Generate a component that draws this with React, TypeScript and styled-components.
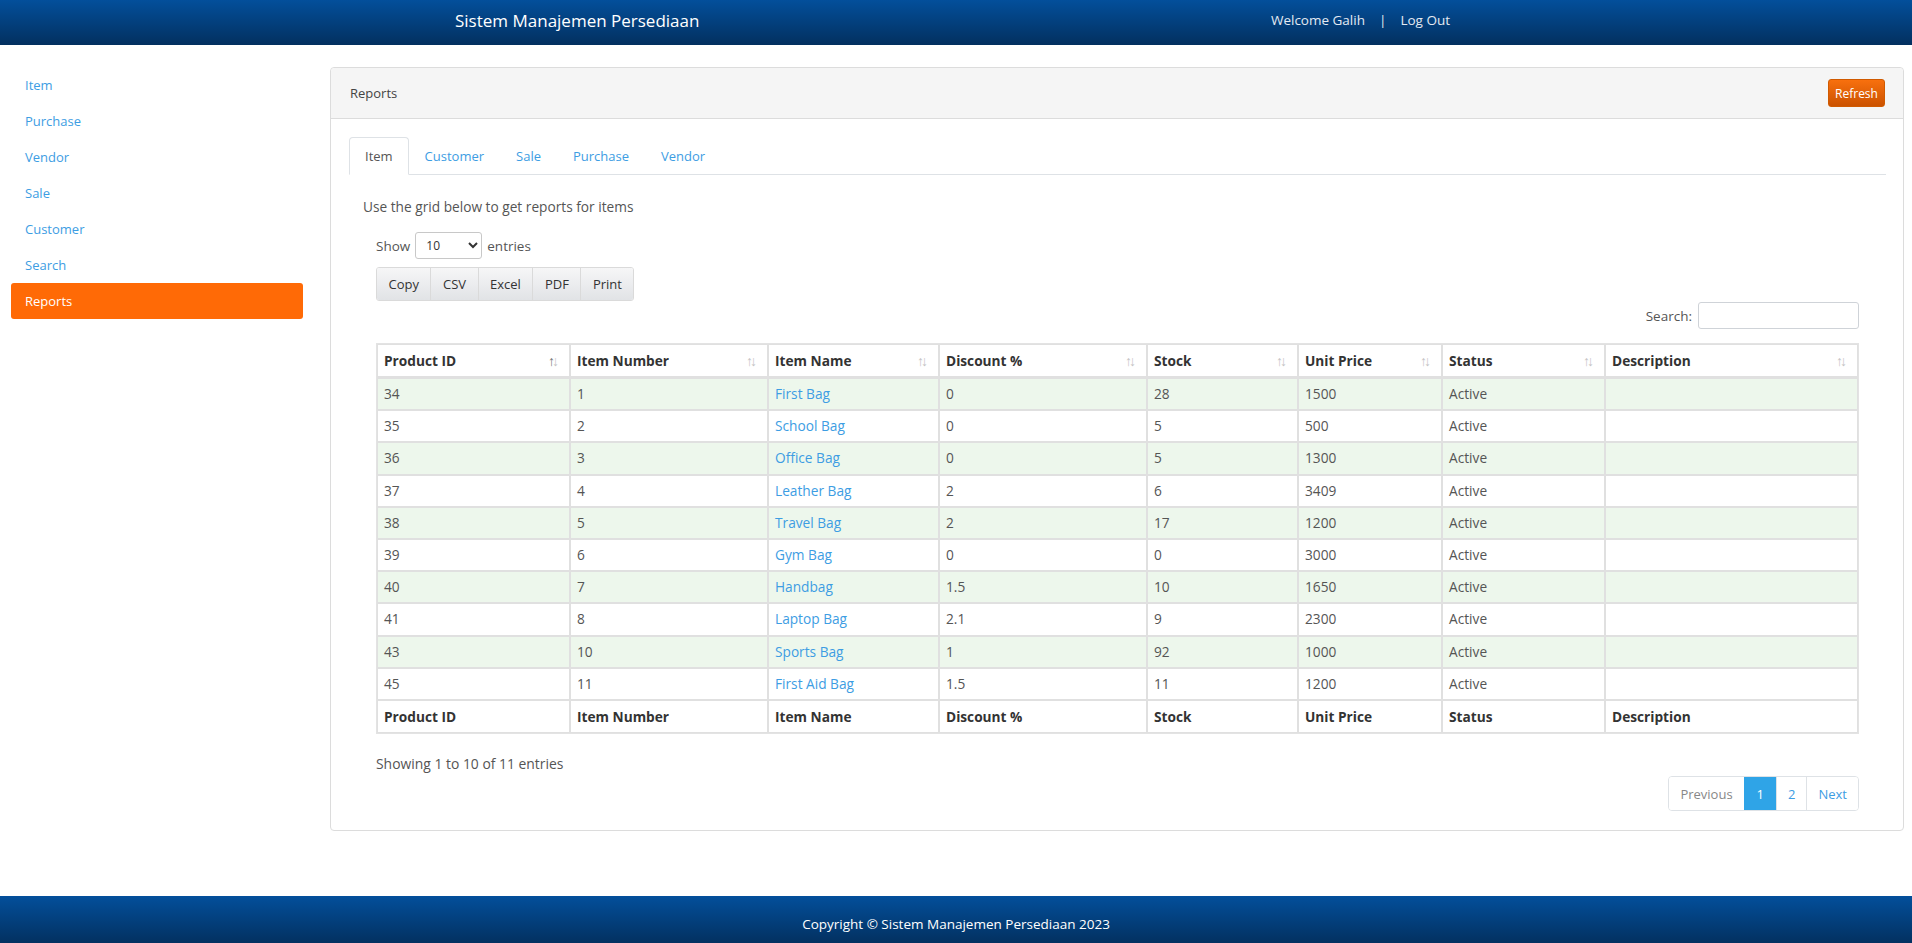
import React from "react";
import styled, { createGlobalStyle } from "styled-components";

const GlobalStyle = createGlobalStyle`
  html, body { margin: 0; padding: 0; }
  body {
    font-family: "Open Sans", "Noto Sans", "Liberation Sans", sans-serif;
    font-size: 13px;
    color: #555;
    background: #fff;
  }
  * { box-sizing: border-box; }
`;

const Page = styled.div`
  min-height: 100vh;
  display: flex;
  flex-direction: column;
`;

const TopBar = styled.header`
  height: 45px;
  background: linear-gradient(to bottom, #034f9b 0%, #03305f 100%);
  color: #fff;
  flex-shrink: 0;
`;

const TopInner = styled.div`
  width: 998px;
  margin: 0 auto;
  height: 100%;
  display: flex;
  align-items: center;
  justify-content: space-between;
  padding-bottom: 5px;
  transform: translateX(-2px);
`;

const Brand = styled.div`
  font-size: 17px;
  color: #fff;
`;

const UserNav = styled.div`
  display: flex;
  align-items: center;
  gap: 14px;
  font-size: 13.5px;
  color: #e4eaf2;
  padding-right: 3px;
`;

const Body = styled.div`
  flex: 1;
  display: flex;
  align-items: flex-start;
  padding: 22px 12px 65px 11px;
  gap: 27px;
`;

const Sidebar = styled.nav`
  width: 292px;
  display: flex;
  flex-direction: column;
  flex-shrink: 0;
`;

const SideLink = styled.a<{ $active?: boolean }>`
  display: flex;
  align-items: center;
  height: 36px;
  padding-left: 14px;
  border-radius: 3px;
  font-size: 13px;
  color: ${(p) => (p.$active ? "#fff" : "#3d9de3")};
  background: ${(p) => (p.$active ? "#ff6a06" : "transparent")};
  text-decoration: none;
  cursor: pointer;
`;

const Panel = styled.section`
  flex: 1;
  border: 1px solid #dcdcdc;
  border-radius: 4px;
  background: #fff;
`;

const PanelHead = styled.div`
  height: 51px;
  background: #f5f5f5;
  border-bottom: 1px solid #dcdcdc;
  border-radius: 4px 4px 0 0;
  display: flex;
  align-items: center;
  justify-content: space-between;
  padding: 0 18px 0 19px;
  color: #444;
  font-size: 13px;
`;

const RefreshButton = styled.button`
  width: 57px;
  height: 28px;
  border: 1px solid #d05a00;
  border-radius: 3px;
  background: linear-gradient(to bottom, #f8700e 0%, #cb5200 100%);
  color: #fff;
  font-family: inherit;
  font-size: 12px;
  padding: 0;
  cursor: pointer;
`;

const PanelBody = styled.div`
  padding: 18px 17px 19px 18px;
`;

const Tabs = styled.ul`
  list-style: none;
  margin: 0;
  padding: 0;
  display: flex;
  border-bottom: 1px solid #dee2e6;
`;

const Tab = styled.li<{ $active?: boolean }>`
  height: 38px;
  margin-bottom: -1px;
  padding: 0 15px;
  display: flex;
  align-items: center;
  font-size: 13px;
  color: ${(p) => (p.$active ? "#555" : "#3d9de3")};
  border: 1px solid ${(p) => (p.$active ? "#dee2e6" : "transparent")};
  border-bottom-color: ${(p) => (p.$active ? "#fff" : "transparent")};
  border-radius: 4px 4px 0 0;
  background: ${(p) => (p.$active ? "#fff" : "transparent")};
  cursor: pointer;
`;

const Intro = styled.p`
  margin: 22px 0 0 14px;
  line-height: 20px;
  font-size: 13.7px;
  color: #555;
`;

const Wrapper = styled.div`
  margin: 0 27px 0 27px;
`;

const LengthRow = styled.div`
  margin-top: 15px;
  display: flex;
  align-items: center;
  gap: 5px;
  color: #555;
  font-size: 13.5px;
`;

const LengthSelect = styled.select`
  width: 67px;
  height: 27px;
  border: 1px solid #c8c8c8;
  border-radius: 3px;
  background: #fff;
  font-family: inherit;
  font-size: 12px;
  color: #333;
  padding: 0 6px;
`;

const ButtonGroup = styled.div`
  margin-top: 8px;
  display: inline-flex;
  border: 1px solid #dadada;
  border-radius: 3px;
  overflow: hidden;
`;

const ExportButton = styled.button`
  height: 32px;
  padding: 0 11.5px;
  border: none;
  border-left: 1px solid #dadada;
  background: linear-gradient(to bottom, #f6f6f7 0%, #e1e3e6 100%);
  font-family: inherit;
  font-size: 13px;
  color: #333;
  cursor: pointer;
  &:first-child { border-left: none; }
`;

const SearchRow = styled.div`
  margin-top: 1px;
  display: flex;
  justify-content: flex-end;
  align-items: center;
  gap: 6px;
  font-size: 13.5px;
  color: #555;
`;

const SearchInput = styled.input`
  width: 161px;
  height: 27px;
  border: 1px solid #cfd3d8;
  border-radius: 3px;
  font-family: inherit;
`;

const Table = styled.table`
  margin-top: 14px;
  width: 100%;
  border-collapse: separate;
  border-spacing: 0;
  border: 1px solid #e3e3e3;
  table-layout: fixed;
  font-size: 13.7px;
`;

const Th = styled.th<{ $foot?: boolean }>`
  text-align: left;
  font-weight: 700;
  color: #333;
  padding: 6px 6px 5px;
  line-height: 20px;
  border: 1px solid #e0e0e0;
  border-bottom-width: ${(p) => (p.$foot ? "1px" : "2px")};
  white-space: nowrap;
`;

const ThInner = styled.div`
  display: flex;
  justify-content: space-between;
  align-items: center;
`;

const SortIcon = styled.span<{ $up?: boolean }>`
  font-weight: 400;
  font-size: 14px;
  letter-spacing: -3px;
  color: #c4c4c4;
  padding-right: 7px;
  & > span:first-child { color: ${(p) => (p.$up ? "#777" : "#c4c4c4")}; }
`;

const Tr = styled.tr<{ $striped?: boolean }>`
  background: ${(p) => (p.$striped ? "#edf7ec" : "#fff")};
`;

const Td = styled.td`
  padding: 5px 6px;
  line-height: 20.2px;
  border: 1px solid #e0e0e0;
  color: #555;
  white-space: nowrap;
`;

const CellLink = styled.a`
  color: #3d9de3;
  text-decoration: none;
  cursor: pointer;
`;

const Info = styled.div`
  margin-top: 20px;
  line-height: 20px;
  color: #555;
  font-size: 13.9px;
`;

const PagerRow = styled.div`
  margin-top: 2px;
  display: flex;
  justify-content: flex-end;
`;

const Pager = styled.ul`
  list-style: none;
  margin: 0;
  padding: 0;
  display: flex;
  border: 1px solid #dee2e6;
  border-radius: 4px;
  overflow: hidden;
`;

const PageItem = styled.li<{ $active?: boolean; $disabled?: boolean }>`
  height: 33px;
  padding: 0 ${(p) => (p.$active ? "12px" : "11px")};
  display: flex;
  align-items: center;
  font-size: 13px;
  border-left: 1px solid ${(p) => (p.$active ? "#2fa4e7" : "#dee2e6")};
  background: ${(p) => (p.$active ? "#2fa4e7" : "#fff")};
  color: ${(p) => (p.$active ? "#fff" : p.$disabled ? "#888" : "#3d9de3")};
  &:first-child { border-left: none; }
  cursor: pointer;
`;

const Footer = styled.footer`
  height: 48px;
  flex-shrink: 0;
  background: linear-gradient(to bottom, #034f9b 0%, #03305f 100%);
  color: #fff;
  display: flex;
  align-items: center;
  justify-content: center;
  font-size: 13.5px;
  padding-top: 8px;
`;

const menu = ["Item", "Purchase", "Vendor", "Sale", "Customer", "Search", "Reports"];
const tabs = ["Item", "Customer", "Sale", "Purchase", "Vendor"];
const columns = [
  { name: "Product ID", w: 193 },
  { name: "Item Number", w: 198 },
  { name: "Item Name", w: 171 },
  { name: "Discount %", w: 208 },
  { name: "Stock", w: 151 },
  { name: "Unit Price", w: 144 },
  { name: "Status", w: 163 },
  { name: "Description", w: 253 },
];
const rows = [
  ["34", "1", "First Bag", "0", "28", "1500"],
  ["35", "2", "School Bag", "0", "5", "500"],
  ["36", "3", "Office Bag", "0", "5", "1300"],
  ["37", "4", "Leather Bag", "2", "6", "3409"],
  ["38", "5", "Travel Bag", "2", "17", "1200"],
  ["39", "6", "Gym Bag", "0", "0", "3000"],
  ["40", "7", "Handbag", "1.5", "10", "1650"],
  ["41", "8", "Laptop Bag", "2.1", "9", "2300"],
  ["43", "10", "Sports Bag", "1", "92", "1000"],
  ["45", "11", "First Aid Bag", "1.5", "11", "1200"],
];

export default function App() {
  return (
    <Page>
      <GlobalStyle />
      <TopBar>
        <TopInner>
          <Brand>Sistem Manajemen Persediaan</Brand>
          <UserNav>
            <span>Welcome Galih</span>
            <span>|</span>
            <span>Log Out</span>
          </UserNav>
        </TopInner>
      </TopBar>
      <Body>
        <Sidebar>
          {menu.map((m) => (
            <SideLink key={m} $active={m === "Reports"}>
              {m}
            </SideLink>
          ))}
        </Sidebar>
        <Panel>
          <PanelHead>
            <span>Reports</span>
            <RefreshButton>Refresh</RefreshButton>
          </PanelHead>
          <PanelBody>
            <Tabs>
              {tabs.map((t) => (
                <Tab key={t} $active={t === "Item"}>
                  {t}
                </Tab>
              ))}
            </Tabs>
            <Intro>Use the grid below to get reports for items</Intro>
            <Wrapper>
              <LengthRow>
                <span>Show</span>
                <LengthSelect defaultValue="10">
                  <option value="10">10</option>
                  <option value="25">25</option>
                  <option value="50">50</option>
                  <option value="100">100</option>
                </LengthSelect>
                <span>entries</span>
              </LengthRow>
              <ButtonGroup>
                {["Copy", "CSV", "Excel", "PDF", "Print"].map((b) => (
                  <ExportButton key={b}>{b}</ExportButton>
                ))}
              </ButtonGroup>
              <SearchRow>
                <span>Search:</span>
                <SearchInput type="search" />
              </SearchRow>
              <Table>
                <colgroup>
                  {columns.map((c) => (
                    <col key={c.name} style={{ width: c.w }} />
                  ))}
                </colgroup>
                <thead>
                  <tr>
                    {columns.map((c, i) => (
                      <Th key={c.name}>
                        <ThInner>
                          <span>{c.name}</span>
                          <SortIcon $up={i === 0}>
                            <span>↑</span>
                            <span>↓</span>
                          </SortIcon>
                        </ThInner>
                      </Th>
                    ))}
                  </tr>
                </thead>
                <tbody>
                  {rows.map((r, i) => (
                    <Tr key={r[0]} $striped={i % 2 === 0}>
                      <Td>{r[0]}</Td>
                      <Td>{r[1]}</Td>
                      <Td>
                        <CellLink>{r[2]}</CellLink>
                      </Td>
                      <Td>{r[3]}</Td>
                      <Td>{r[4]}</Td>
                      <Td>{r[5]}</Td>
                      <Td>Active</Td>
                      <Td></Td>
                    </Tr>
                  ))}
                </tbody>
                <tfoot>
                  <tr>
                    {columns.map((c) => (
                      <Th key={c.name} $foot>
                        {c.name}
                      </Th>
                    ))}
                  </tr>
                </tfoot>
              </Table>
              <Info>Showing 1 to 10 of 11 entries</Info>
              <PagerRow>
                <Pager>
                  <PageItem $disabled>Previous</PageItem>
                  <PageItem $active>1</PageItem>
                  <PageItem>2</PageItem>
                  <PageItem>Next</PageItem>
                </Pager>
              </PagerRow>
            </Wrapper>
          </PanelBody>
        </Panel>
      </Body>
      <Footer>Copyright © Sistem Manajemen Persediaan 2023</Footer>
    </Page>
  );
}
